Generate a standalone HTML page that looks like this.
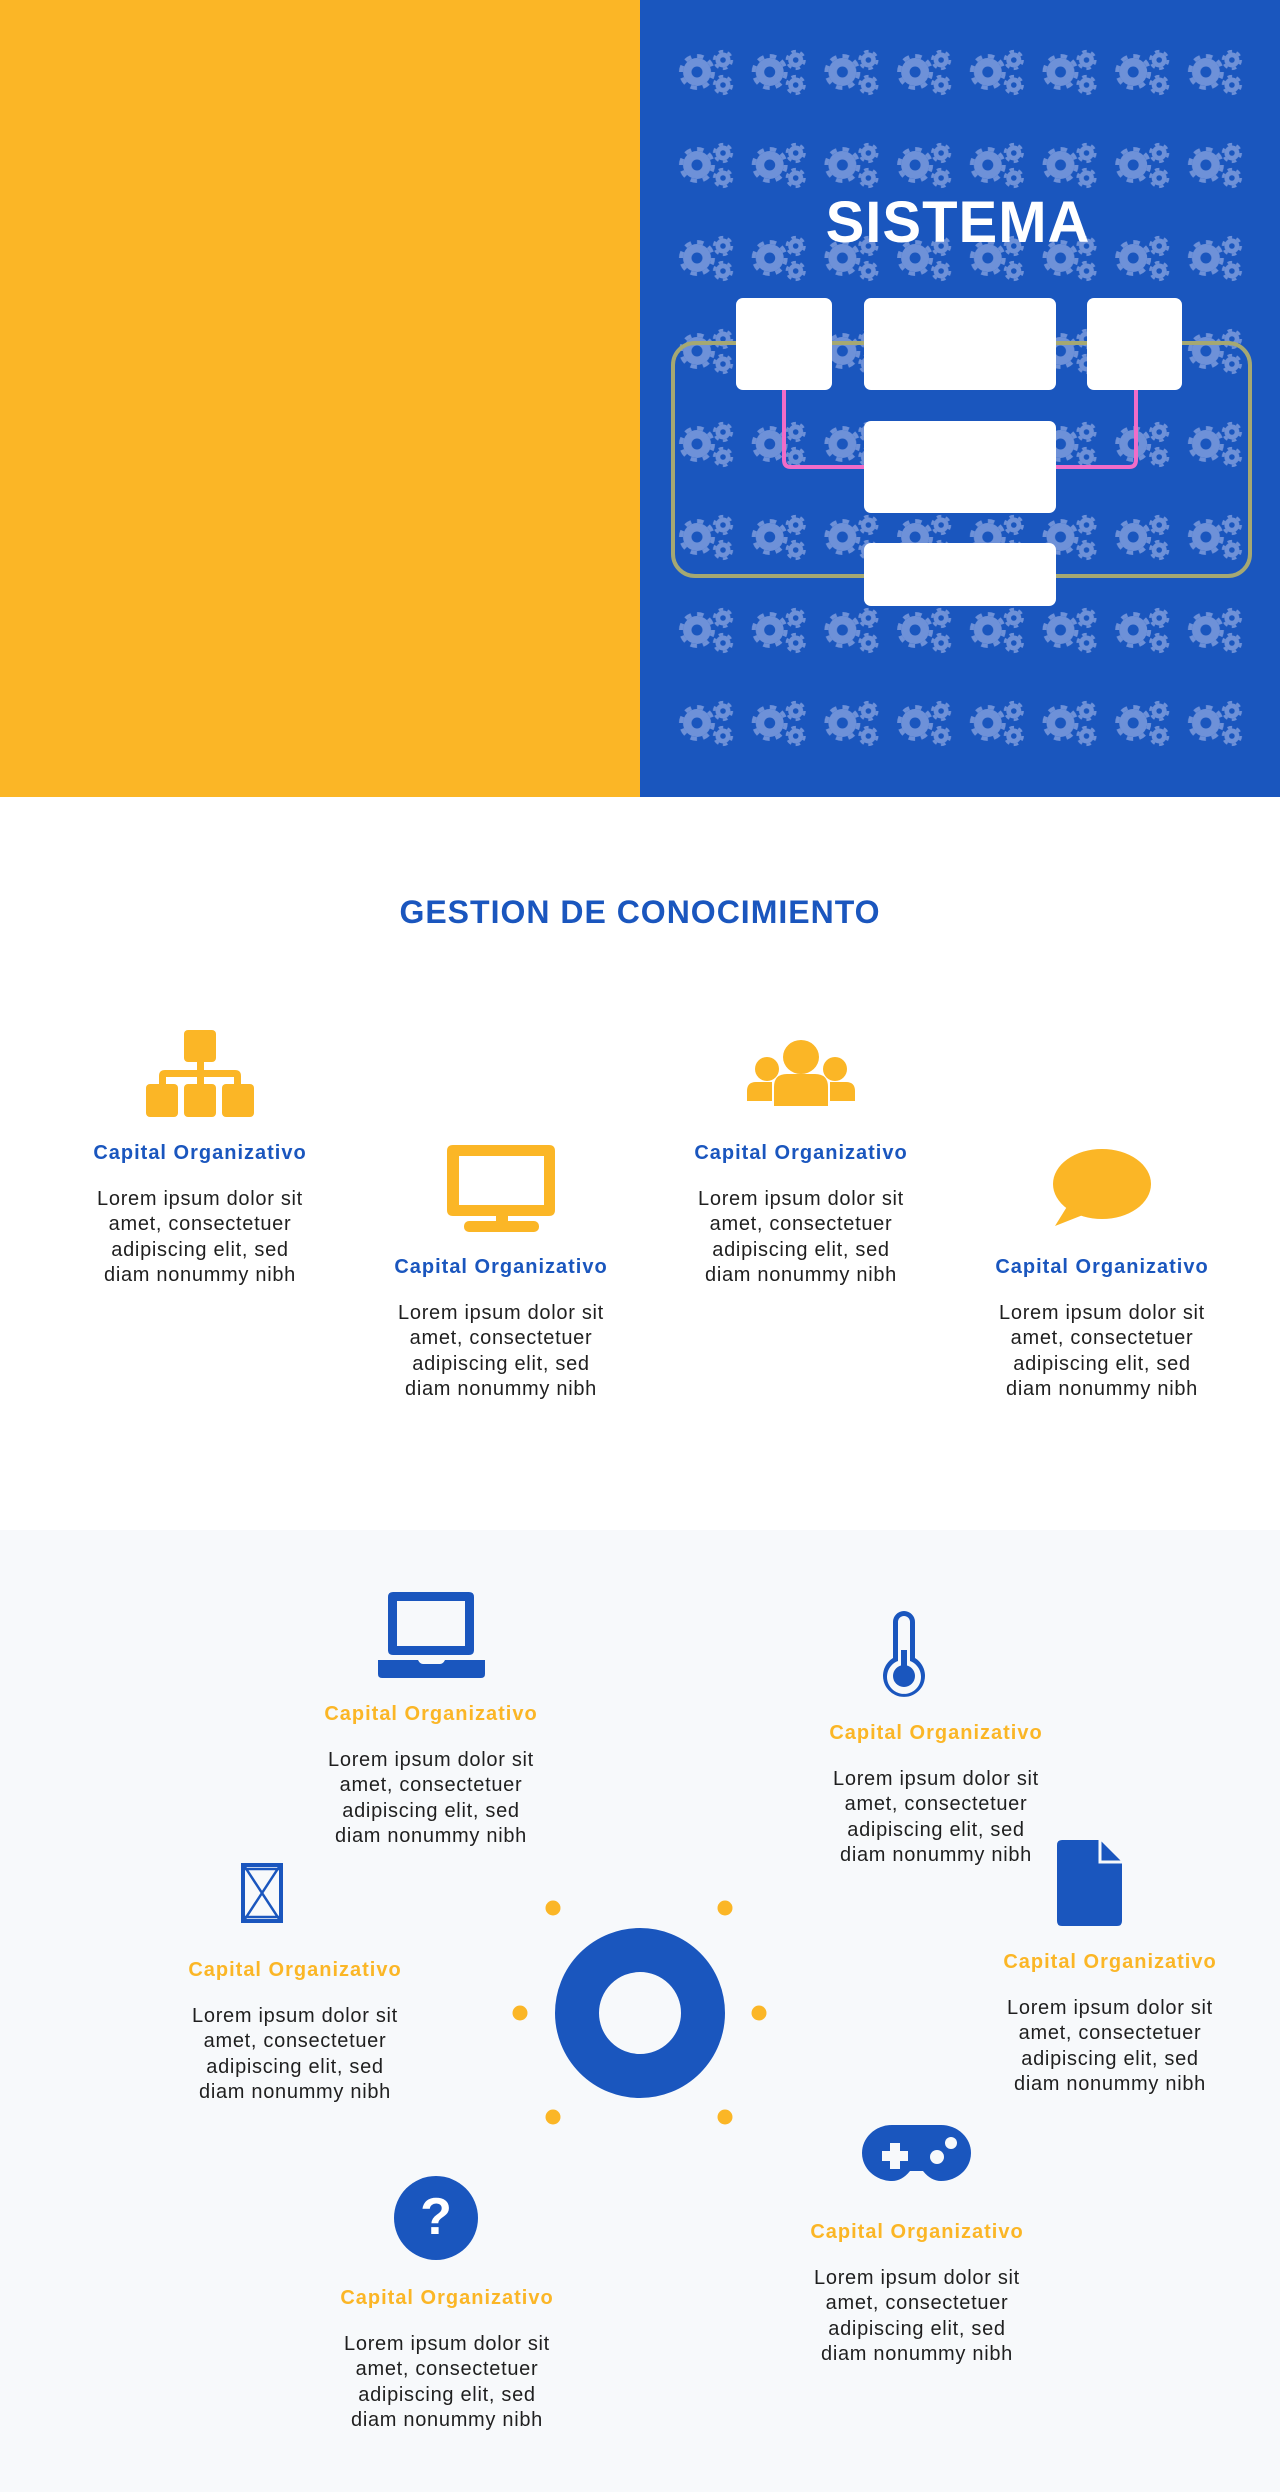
<!DOCTYPE html>
<html><head><meta charset="utf-8"><style>
*{margin:0;padding:0;box-sizing:border-box}
body{width:1280px;height:2492px;position:relative;background:#fff;font-family:"Liberation Sans",sans-serif;overflow:hidden}
.abs{position:absolute}
.item{position:absolute;width:300px;margin-left:-20px;text-align:center}
.item h3{font-size:20px;font-weight:bold;line-height:24px;margin-bottom:22px;letter-spacing:1px}
.item p{font-size:20px;line-height:25.3px;color:#1f1f1f;letter-spacing:0.7px}
.b h3{color:#1a56be}
.y h3{color:#fbb626}
</style></head><body>
<div class="abs" style="left:0;top:0;width:640px;height:797px;background:#fbb626"></div>
<svg class="abs" style="left:640px;top:0" width="640" height="797" viewBox="0 0 640 797">
<defs>
<pattern id="g" x="21" y="26" width="72.7" height="93" patternUnits="userSpaceOnUse">
<g fill="#6e91d8">
<circle cx="36" cy="46" r="14"/>
<circle cx="36" cy="46" r="16" fill="none" stroke="#6e91d8" stroke-width="4" stroke-dasharray="6.5 6.06"/>
<circle cx="62" cy="34" r="7.5"/>
<circle cx="62" cy="34" r="8.8" fill="none" stroke="#6e91d8" stroke-width="2.6" stroke-dasharray="4.6 4.6"/>
<circle cx="62" cy="59" r="7.5"/>
<circle cx="62" cy="59" r="8.8" fill="none" stroke="#6e91d8" stroke-width="2.6" stroke-dasharray="4.6 4.6"/>
</g>
<circle cx="36" cy="46" r="5.5" fill="#1a56be"/>
<circle cx="62" cy="34" r="2.8" fill="#1a56be"/>
<circle cx="62" cy="59" r="2.8" fill="#1a56be"/>
</pattern>
</defs>
<rect width="640" height="797" fill="#1a56be"/>
<rect x="21" y="26" width="582" height="744" fill="url(#g)"/>
<rect x="33" y="343" width="577" height="233" rx="22" fill="none" stroke="#a5a872" stroke-width="4"/>
<path d="M144 390 V460 q0 7 7 7 H224 M416 467 H489 q7 0 7-7 V390" fill="none" stroke="#f06cc8" stroke-width="4"/>
<g fill="#fff">
<rect x="96" y="298" width="96" height="92" rx="7"/>
<rect x="224" y="298" width="192" height="92" rx="7"/>
<rect x="447" y="298" width="95" height="92" rx="7"/>
<rect x="224" y="421" width="192" height="92" rx="7"/>
<rect x="224" y="543" width="192" height="63" rx="7"/>
</g>
<text x="318" y="242" text-anchor="middle" fill="#fff" font-family="Liberation Sans" font-weight="bold" font-size="58" letter-spacing="1">SISTEMA</text>
</svg>

<div class="abs" style="left:0;top:894px;width:1280px;text-align:center;font-size:32px;font-weight:bold;color:#1a56be;letter-spacing:1px">GESTION DE CONOCIMIENTO</div>

<svg class="abs" style="left:0;top:0" width="1280" height="1530">
<g fill="#fbb626">
<rect x="184" y="1030" width="32" height="32" rx="4"/>
<rect x="146" y="1084" width="32" height="33" rx="4"/>
<rect x="184" y="1084" width="32" height="33" rx="4"/>
<rect x="222" y="1084" width="32" height="33" rx="4"/>
<rect x="197" y="1060" width="7" height="26"/>
<path d="M159 1086 V1076 q0-6 6-6 H235 q6 0 6 6 V1086 H234 V1077 H166 V1086Z"/>
<path fill-rule="evenodd" d="M453 1145 H549 q6 0 6 6 V1210 q0 6-6 6 H453 q-6 0-6-6 V1151 q0-6 6-6Z M459 1156 V1205 H544 V1156Z"/>
<rect x="496" y="1214" width="12" height="10"/>
<rect x="464" y="1221" width="75" height="11" rx="5"/>
<ellipse cx="801" cy="1057" rx="18" ry="17"/>
<path d="M774 1106 V1087 q0-13 13-13 H815 q13 0 13 13 V1106Z"/>
<ellipse cx="767" cy="1069" rx="12" ry="12"/>
<ellipse cx="835" cy="1069" rx="12" ry="12"/>
<path d="M747 1101 V1091 q0-9 9-9 H772 V1101Z M855 1101 V1091 q0-9-9-9 H830 V1101Z"/>
<ellipse cx="1102" cy="1184" rx="49" ry="35"/>
<path d="M1068 1205 L1055 1226 L1088 1213Z"/>
</g>
</svg>

<div class="item b" style="left:70px;top:1141px"><h3>Capital Organizativo</h3><p>Lorem ipsum dolor sit<br>amet, consectetuer<br>adipiscing elit, sed<br>diam nonummy nibh</p></div>
<div class="item b" style="left:371px;top:1255px"><h3>Capital Organizativo</h3><p>Lorem ipsum dolor sit<br>amet, consectetuer<br>adipiscing elit, sed<br>diam nonummy nibh</p></div>
<div class="item b" style="left:671px;top:1141px"><h3>Capital Organizativo</h3><p>Lorem ipsum dolor sit<br>amet, consectetuer<br>adipiscing elit, sed<br>diam nonummy nibh</p></div>
<div class="item b" style="left:972px;top:1255px"><h3>Capital Organizativo</h3><p>Lorem ipsum dolor sit<br>amet, consectetuer<br>adipiscing elit, sed<br>diam nonummy nibh</p></div>

<div class="abs" style="left:0;top:1530px;width:1280px;height:962px;background:#f7f9fb"></div>
<svg class="abs" style="left:0;top:0" width="1280" height="2492">
<g fill="#1a56be">
<path fill-rule="evenodd" d="M393 1592 H469 q5 0 5 5 V1650 q0 5-5 5 H393 q-5 0-5-5 V1597 q0-5 5-5Z M397 1601 V1646 H465 V1601Z"/>
<path d="M378 1660 H418 q2 4 5 4 H440 q3 0 5-4 H485 V1674 q0 4-4 4 H382 q-4 0-4-4Z"/>
<path fill-rule="evenodd" d="M893 1622 a11 11 0 0 1 22 0 V1658 a21 21 0 1 1 -22 0Z M898 1622 V1661 a17 17 0 1 0 12 0 V1622 a6 6 0 0 0 -12 0Z"/>
<circle cx="904" cy="1676" r="11"/>
<rect x="901" y="1650" width="6" height="20"/>
<path d="M1062 1840 H1100 L1122 1862 V1921 q0 5-5 5 H1062 q-5 0-5-5 V1845 q0-5 5-5Z"/>
<circle cx="640" cy="2013" r="63" fill="none" stroke="#1a56be" stroke-width="44"/>
<path fill-rule="evenodd" d="M892 2125 H941 a30 28 0 0 1 0 56 q-10 0-18-10 H910 q-8 10-18 10 a30 28 0 0 1 0-56Z M882 2144 V2161 H890 V2169 H900 V2161 H908 V2151 H900 V2143 H890 V2151 H882Z"/>
<circle cx="436" cy="2218" r="42"/>
</g>
<path d="M1100 1840 V1862 H1122" fill="none" stroke="#f7f9fb" stroke-width="3"/>
<g fill="#f7f9fb"><circle cx="951" cy="2143" r="6"/><circle cx="937" cy="2157" r="7"/></g>
<rect x="243" y="1865" width="38" height="56" fill="none" stroke="#1a56be" stroke-width="4"/>
<path d="M245 1867 L279 1919 M279 1867 L245 1919 M245 1869 H279 M245 1917 H279" stroke="#1a56be" stroke-width="2.5"/>
<text x="436" y="2234" text-anchor="middle" fill="#fff" font-family="Liberation Sans" font-weight="bold" font-size="52">?</text>
<g fill="#fbb626">
<circle cx="553" cy="1908" r="7.5"/><circle cx="725" cy="1908" r="7.5"/>
<circle cx="520" cy="2013" r="7.5"/><circle cx="759" cy="2013" r="7.5"/>
<circle cx="553" cy="2117" r="7.5"/><circle cx="725" cy="2117" r="7.5"/>
</g>
</svg>

<div class="item y" style="left:301px;top:1702px"><h3>Capital Organizativo</h3><p>Lorem ipsum dolor sit<br>amet, consectetuer<br>adipiscing elit, sed<br>diam nonummy nibh</p></div>
<div class="item y" style="left:806px;top:1721px"><h3>Capital Organizativo</h3><p>Lorem ipsum dolor sit<br>amet, consectetuer<br>adipiscing elit, sed<br>diam nonummy nibh</p></div>
<div class="item y" style="left:165px;top:1958px"><h3>Capital Organizativo</h3><p>Lorem ipsum dolor sit<br>amet, consectetuer<br>adipiscing elit, sed<br>diam nonummy nibh</p></div>
<div class="item y" style="left:980px;top:1950px"><h3>Capital Organizativo</h3><p>Lorem ipsum dolor sit<br>amet, consectetuer<br>adipiscing elit, sed<br>diam nonummy nibh</p></div>
<div class="item y" style="left:787px;top:2220px"><h3>Capital Organizativo</h3><p>Lorem ipsum dolor sit<br>amet, consectetuer<br>adipiscing elit, sed<br>diam nonummy nibh</p></div>
<div class="item y" style="left:317px;top:2286px"><h3>Capital Organizativo</h3><p>Lorem ipsum dolor sit<br>amet, consectetuer<br>adipiscing elit, sed<br>diam nonummy nibh</p></div>
</body></html>
